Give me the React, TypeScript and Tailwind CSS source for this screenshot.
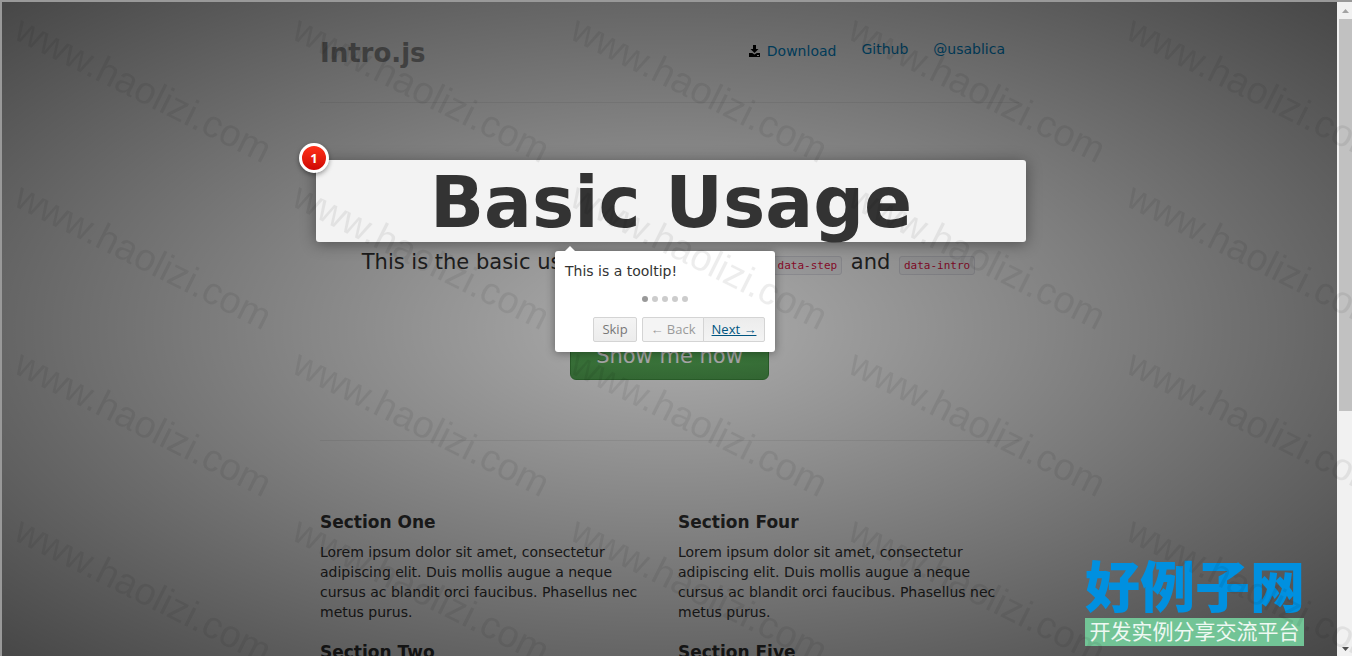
type Section = {
  title: string
  body: string
}

const LOREM =
  'Lorem ipsum dolor sit amet, consectetur adipiscing elit. Duis mollis augue a neque cursus ac blandit orci faucibus. Phasellus nec metus purus.'

const sections: Section[] = [
  { title: 'Section One', body: LOREM },
  { title: 'Section Four', body: LOREM },
  { title: 'Section Two', body: LOREM },
  { title: 'Section Five', body: LOREM },
]

const STEP_COUNT = 5

function DownloadIcon() {
  return (
    <svg className="mr-[7px] h-3 w-[11px]" viewBox="0 0 11 12" fill="#000" aria-hidden="true">
      <path d="M4 0h3v4h2.500L5.500 8 1.500 4H4z" />
      <path d="M0 8h3.200l2.300 1.500L7.800 8H11v4H0zM8 10v1h2v-1z" fillRule="evenodd" />
    </svg>
  )
}

function Divider() {
  return <hr className="border-t border-b border-t-[#eee] border-b-white" />
}

function Masthead() {
  return (
    <header className="flex items-start justify-between pt-5">
      <h3 className="mt-[11px] mb-[9px] text-[26px] leading-[40px] font-bold text-[#999]">Intro.js</h3>
      <nav className="mt-[17px] mr-[14px] flex gap-[25px] text-sm leading-[20px] text-[#0088cc]">
        <span className="flex items-center pt-[2px]">
          <DownloadIcon />
          <a href="#download">Download</a>
        </span>
        <a href="#github">Github</a>
        <a href="#usablica">@usablica</a>
      </nav>
    </header>
  )
}

function Tooltip() {
  return (
    <div className="absolute top-full left-[239px] mt-[9px] w-[220px] rounded-[3px] bg-white p-[10px] text-left text-sm leading-[20px] font-normal text-[#333] shadow-[0_1px_10px_rgba(0,0,0,0.4)]">
      <span className="absolute -top-[5px] left-[10px] border-x-[5px] border-b-[5px] border-x-transparent border-b-white" />
      <p>This is a tooltip!</p>
      <ul className="mt-[15px] flex justify-center gap-1">
        {Array.from({ length: STEP_COUNT }, (_, i) => (
          <li key={i} className={i === 0 ? 'size-[6px] rounded-full bg-[#999]' : 'size-[6px] rounded-full bg-[#ccc]'} />
        ))}
      </ul>
      <div className="mt-[15px] flex justify-end font-['Open_Sans',sans-serif] text-[13px] leading-[23px]">
        <button className="mr-[5px] w-[44px] rounded-[2px] border border-[#d4d4d4] bg-linear-to-b from-[#f4f4f4] to-[#ececec] text-[#777]">
          Skip
        </button>
        <button className="w-[62px] rounded-l-[2px] border border-[#d4d4d4] bg-[#f4f4f4] text-[#9a9a9a]">← Back</button>
        <button className="-ml-px w-[62px] rounded-r-[2px] border border-[#d4d4d4] bg-linear-to-b from-[#ececec] to-[#f4f4f4] text-[#005580] underline">
          Next →
        </button>
      </div>
    </div>
  )
}

function Code({ children }: { children: string }) {
  return (
    <code className="mx-[2px] rounded-[3px] border border-[#e1e1e8] bg-[#f7f7f9] px-1 py-[2px] font-['DejaVu_Sans_Mono',monospace] text-[11px] leading-[14px] text-[#dd1144]">
      {children}
    </code>
  )
}

function Jumbotron() {
  return (
    <section className="mt-[56px] mb-[60px] text-center">
      <div className="relative z-20 -mr-[7px] -ml-1 rounded-[3px] bg-[#f3f3f3] pt-[7px] pb-[3px] shadow-[0_2px_15px_rgba(0,0,0,0.4)]">
        <h1 className="text-[71px] leading-[72px] font-bold text-[#333]">Basic Usage</h1>
        <span className="absolute -top-[17px] -left-[17px] flex size-[30px] items-center justify-center rounded-full border-[3px] border-white bg-linear-to-b from-[#ff3019] to-[#cf0404] font-['Open_Sans',sans-serif] text-[13px] leading-[20px] font-bold text-white shadow-[0_2px_5px_rgba(0,0,0,0.4)]">
          1
        </span>
        <Tooltip />
      </div>
      <p className="mt-[5px] mb-[25px] text-[21px] leading-[30px] text-[#333]">
        This is the basic usage of Intro.js, with <Code>data-step</Code> and <Code>data-intro</Code> attributes
      </p>
      <button className="mx-auto block h-12 w-[199px] rounded-[6px] border border-[#3f8f3f] bg-linear-to-b from-[#62c462] to-[#51a351] text-[21px] leading-[20px] text-white text-shadow-[0_-1px_0_rgba(0,0,0,0.25)]">
        Show me now
      </button>
    </section>
  )
}

function Scrollbar() {
  return (
    <div className="flex w-[15px] shrink-0 flex-col items-center bg-[#f1f1f1] pl-[2px]" aria-hidden="true">
      <svg className="h-[17px] w-[13px]" viewBox="0 0 13 17" fill="#a3a3a3">
        <path d="M3 11h7L6.500 7z" />
      </svg>
      <div className="mb-auto h-[60%] w-full bg-[#c1c1c1]" />
      <svg className="h-[17px] w-[13px]" viewBox="0 0 13 17" fill="#505050">
        <path d="M3 8h7l-3.500 4z" />
      </svg>
    </div>
  )
}

function SiteLogo() {
  return (
    <div className="absolute right-12 bottom-[10px] z-30 w-[219px] font-['Noto_Sans_CJK_SC',sans-serif]">
      <p className="pb-[5px] text-[55px] leading-[60px] font-black whitespace-nowrap text-[#0090e0]">好例子网</p>
      <p className="bg-[#72c496] pb-1 text-center text-[21px] leading-[24px] whitespace-nowrap text-[#eef8f2]">
        开发实例分享交流平台
      </p>
    </div>
  )
}

// repeating diagonal domain name laid over the whole window
function Watermark() {
  return (
    <svg className="pointer-events-none absolute inset-0 z-40 size-full" aria-hidden="true">
      <defs>
        <pattern id="mark" width="278" height="167" patternUnits="userSpaceOnUse">
          <text
            transform="translate(10 36) rotate(26.6)"
            className="fill-black/7 font-['Liberation_Sans',Arial,sans-serif] text-[38px]"
          >
            www.haolizi.com
          </text>
        </pattern>
      </defs>
      <rect width="100%" height="100%" fill="url(#mark)" />
    </svg>
  )
}

export default function App() {
  return (
    <div className="relative flex h-screen overflow-hidden border-t-2 border-l-2 border-[#999] bg-white font-['DejaVu_Sans',Verdana,sans-serif] text-[#333]">
      <main className="relative min-w-0 flex-1 overflow-hidden">
        <div className="mx-auto max-w-[699px]">
          <Masthead />
          <div className="h-5" />
          <Divider />
          <Jumbotron />
          <Divider />
          <div className="mt-[70px] grid grid-cols-2 gap-x-[17px] gap-y-5">
            {sections.map((section) => (
              <article key={section.title}>
                <h4 className="text-[17px] leading-[20px] font-bold">{section.title}</h4>
                <p className="mt-[10px] text-sm leading-[20px]">{section.body}</p>
              </article>
            ))}
          </div>
        </div>
        <div className="absolute inset-0 z-10 bg-[radial-gradient(ellipse_farthest-corner,rgba(0,0,0,0.4)_0,rgba(0,0,0,0.9)_100%)] opacity-80" />
      </main>
      <Scrollbar />
      <SiteLogo />
      <Watermark />
    </div>
  )
}
